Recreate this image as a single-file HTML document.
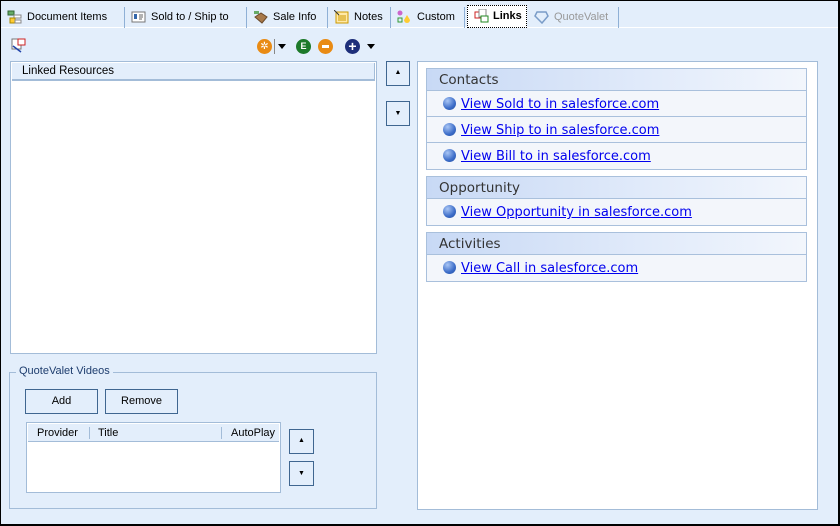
<!DOCTYPE html>
<html><head><style>
*{box-sizing:border-box;margin:0;padding:0}
body{width:840px;height:526px;background:#e3eefb;font-family:"Liberation Sans",Tahoma,sans-serif;font-size:11px;color:#000;position:relative;overflow:hidden}
.frame{position:absolute;left:0;top:0;width:840px;height:526px;border:1px solid #000;border-right-width:2px;border-bottom-width:2px}
.a{position:absolute}
.tabbar{position:absolute;left:1px;top:1px;width:837px;height:27px;border-bottom:1px solid #fff}
.tab{position:absolute;top:6px;height:21px;line-height:21px;font-size:11px;border-right:1px solid #8fb0d6;padding-left:26px;white-space:nowrap}
.ic{position:absolute;left:6px;top:3px;width:15px;height:14px}
.box{background:#fff;border:1px solid #a3bcd8}
.btn{position:absolute;border:1px solid #3f6690;background:#e3eefb;text-align:center;font-size:11px}
.sec{position:absolute;left:426px;width:381px;border:1px solid #a9c0dc;background:#f2f6fc}
.sh{height:22px;line-height:23px;padding-left:12px;color:#333;background:linear-gradient(90deg,#c8d9f5,#e6eefb 70%,#f2f6fc);border-bottom:1px solid #a9c0dc;font-family:"DejaVu Sans",sans-serif;font-size:13.5px}
.row{height:26px;line-height:27px;padding-left:34px;font-size:13px;font-family:"DejaVu Sans",sans-serif;border-bottom:1px solid #a9c0dc;position:relative;background:#f3f6fb}
.row:last-child{border-bottom:none}
.row a{color:#0000ee;text-decoration:underline}
.dot{position:absolute;left:16px;top:6px;width:13px;height:13px;border-radius:50%;background:radial-gradient(circle at 35% 30%,#a9c6f5,#3b6cc8 60%,#27509f)}
</style></head><body>
<div class="tabbar">
<div class="tab" style="left:0;width:124px"><svg class="ic" viewBox="0 0 15 14"><rect x="1" y="1" width="6" height="4" fill="#6a6" stroke="#363"/><rect x="7" y="5" width="7" height="3" fill="#fff" stroke="#888"/><rect x="3" y="8" width="5" height="5" fill="#fc3" stroke="#a80"/><rect x="8" y="10" width="6" height="3" fill="#fff" stroke="#888"/></svg>Document Items</div>
<div class="tab" style="left:124px;width:122px"><svg class="ic" viewBox="0 0 15 14"><rect x="1" y="2" width="13" height="10" fill="#fff" stroke="#777"/><rect x="3" y="4" width="3" height="5" fill="#36a"/><path d="M8 5h4M8 7h4M8 9h3" stroke="#666"/></svg>Sold to / Ship to</div>
<div class="tab" style="left:246px;width:81px"><svg class="ic" viewBox="0 0 15 14"><rect x="1" y="1" width="5" height="3" fill="#6a6"/><path d="M2 7l6-4 6 4-5 6z" fill="#a8794a" stroke="#6b4a2a"/></svg>Sale Info</div>
<div class="tab" style="left:327px;width:63px"><svg class="ic" viewBox="0 0 15 14"><rect x="2" y="2" width="12" height="11" fill="#ffe9a8" stroke="#c90"/><path d="M4 6h8M4 8h8M4 10h8" stroke="#c90"/><path d="M0 0l5 5" stroke="#333"/></svg>Notes</div>
<div class="tab" style="left:390px;width:74px"><svg class="ic" viewBox="0 0 15 14"><circle cx="3" cy="3" r="2.5" fill="#c6c" /><rect x="1" y="8" width="4" height="4" fill="none" stroke="#393"/><path d="M10 5l-3 5a3 3 0 0 0 6 0z" fill="#fc3"/></svg>Custom</div>
<div class="tab" style="left:466px;top:4px;height:23px;width:60px;border:1px dotted #000;background:#fff;font-weight:bold;padding-left:25px"><svg class="ic" viewBox="0 0 15 14"><rect x="1" y="3" width="6" height="6" fill="#fff" stroke="#c22"/><rect x="5" y="0" width="7" height="8" fill="#fff" stroke="#888"/><rect x="7" y="7" width="7" height="6" fill="#fff" stroke="#282"/></svg>Links</div>
<div class="tab" style="left:527px;width:91px;color:#999"><svg class="ic" viewBox="0 0 15 14"><path d="M3 2h9l2 4-6 7-7-7z" fill="none" stroke="#7a9cc8" stroke-width="1.5"/></svg>QuoteValet</div>
</div>
<svg class="a" style="left:11px;top:38px" width="16" height="15" viewBox="0 0 16 15"><rect x="1" y="1" width="9" height="10" fill="#fff" stroke="#777"/><rect x="7" y="1" width="7" height="6" fill="#fff" stroke="#c22"/><path d="M2 8l8 6" stroke="#24a" stroke-width="1.5"/></svg>
<div class="a" style="left:257px;top:39px;width:15px;height:15px;border-radius:50%;background:#e98b14;color:#fff;font-size:10px;text-align:center;line-height:15px">✲</div>
<div class="a" style="left:274px;top:39px;width:1px;height:15px;background:#888"></div>
<div class="a" style="left:278px;top:44px;border:4px solid transparent;border-top:5px solid #000"></div>
<div class="a" style="left:296px;top:39px;width:15px;height:15px;border-radius:50%;background:#1d7a2a;color:#fff;font-size:9px;font-weight:bold;text-align:center;line-height:15px">E</div>
<div class="a" style="left:318px;top:39px;width:15px;height:15px;border-radius:50%;background:#e98b14"><div class="a" style="left:4px;top:6px;width:7px;height:3px;background:#fff"></div></div>
<div class="a" style="left:345px;top:39px;width:15px;height:15px;border-radius:50%;background:#1e2f7a;color:#fff;font-size:14px;font-weight:bold;text-align:center;line-height:14px">+</div>
<div class="a" style="left:367px;top:44px;border:4px solid transparent;border-top:5px solid #000"></div>
<div class="a box" style="left:10px;top:61px;width:367px;height:293px"><div style="height:18px;line-height:17px;padding-left:10px;font-size:11.5px;background:#e3eefb;border-right:1px solid #a3bcd8;border-bottom:2px solid #a3bcd8;margin:1px">Linked Resources</div></div>
<div class="btn" style="left:386px;top:61px;width:24px;height:25px;line-height:22px;font-size:7px">▲</div>
<div class="btn" style="left:386px;top:101px;width:24px;height:25px;line-height:24px;font-size:7px">▼</div>
<div class="a" style="left:9px;top:372px;width:368px;height:137px;border:1px solid #a3bcd8"></div>
<div class="a" style="left:16px;top:365px;padding:0 3px;background:#e3eefb;color:#1e3d6e;font-size:11px">QuoteValet Videos</div>
<div class="btn" style="left:25px;top:389px;width:73px;height:25px;line-height:23px">Add</div>
<div class="btn" style="left:105px;top:389px;width:73px;height:25px;line-height:23px">Remove</div>
<div class="a box" style="left:26px;top:422px;width:255px;height:71px"><div style="height:18px;line-height:18px;background:#e3eefb;border-bottom:1px solid #a3bcd8;margin:1px;position:relative;font-size:11px"><span class="a" style="left:9px">Provider</span><span class="a" style="left:61px;top:3px;width:1px;height:12px;background:#a3bcd8"></span><span class="a" style="left:70px">Title</span><span class="a" style="left:193px;top:3px;width:1px;height:12px;background:#a3bcd8"></span><span class="a" style="left:203px">AutoPlay</span></div></div>
<div class="btn" style="left:289px;top:429px;width:25px;height:25px;line-height:22px;font-size:7px">▲</div>
<div class="btn" style="left:289px;top:461px;width:25px;height:25px;line-height:24px;font-size:7px">▼</div>
<div class="a" style="left:417px;top:61px;width:401px;height:449px;background:#fff;border:1px solid #a3bcd8"></div>
<div class="sec" style="top:68px"><div class="sh">Contacts</div><div class="row"><span class="dot"></span><a>View Sold to in salesforce.com</a></div><div class="row"><span class="dot"></span><a>View Ship to in salesforce.com</a></div><div class="row"><span class="dot"></span><a>View Bill to in salesforce.com</a></div></div>
<div class="sec" style="top:176px"><div class="sh">Opportunity</div><div class="row"><span class="dot"></span><a>View Opportunity in salesforce.com</a></div></div>
<div class="sec" style="top:232px"><div class="sh">Activities</div><div class="row"><span class="dot"></span><a>View Call in salesforce.com</a></div></div>
<div class="frame"></div>
</body></html>
